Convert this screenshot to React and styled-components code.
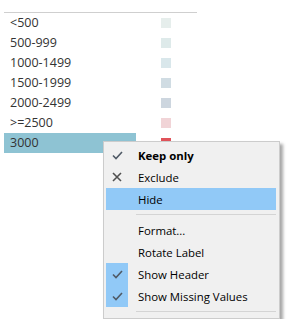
import React from 'react'
import styled, { createGlobalStyle } from 'styled-components'

const Global = createGlobalStyle`
  body {
    margin: 0;
    background: #fff;
    font-family: "Open Sans", "Noto Sans", sans-serif;
  }
`

const legend = [
  { label: '<500', color: '#e6eeec' },
  { label: '500-999', color: '#deeaea' },
  { label: '1000-1499', color: '#d9e7eb' },
  { label: '1500-1999', color: '#d0dce3' },
  { label: '2000-2499', color: '#cdd6df' },
  { label: '>=2500', color: '#f1d4d7' },
  { label: '3000', color: '#e0535a', selected: true },
]

const Check = () => (
  <svg width="11" height="9" viewBox="0 0 11 9">
    <polyline points="1,4.5 4,7.5 10,1" fill="none" stroke="#505a66" strokeWidth="1.6" />
  </svg>
)

const Cross = () => (
  <svg width="10" height="10" viewBox="0 0 10 10">
    <path d="M1 1 L9 9 M9 1 L1 9" stroke="#505050" strokeWidth="1.6" />
  </svg>
)

const App = () => {
  return (
    <>
      <Global />
      <Page>
        <Legend>
          {legend.map((l) => (
            <Row key={l.label}>
              <Label selected={l.selected}>{l.label}</Label>
              <Swatch style={{ background: l.color }} />
            </Row>
          ))}
        </Legend>
        <Menu>
          <Item bold>
            <Icon><Check /></Icon>
            Keep only
          </Item>
          <Item>
            <Icon><Cross /></Icon>
            Exclude
          </Item>
          <Item active>
            <Icon />
            Hide
          </Item>
          <Separator />
          <Item>
            <Icon />
            Format...
          </Item>
          <Item>
            <Icon />
            Rotate Label
          </Item>
          <Item>
            <Icon checked><Check /></Icon>
            Show Header
          </Item>
          <Item>
            <Icon checked><Check /></Icon>
            Show Missing Values
          </Item>
          <Separator />
        </Menu>
      </Page>
    </>
  )
}

const Page = styled.div`
  position: relative;
  width: 299px;
  height: 319px;
  overflow: hidden;
`
const Legend = styled.div`
  margin: 12px 0 0 4px;
  width: 193px;
  border-top: 1px solid #cfcfcf;
`
const Row = styled.div`
  display: flex;
  align-items: center;
  height: 20px;
`
const Label = styled.div`
  width: 132px;
  height: 20px;
  line-height: 20px;
  box-sizing: border-box;
  padding-left: 6px;
  font-size: 12.5px;
  color: #333;
  background: ${(p) => (p.selected ? '#8ec3d3' : 'transparent')};
`
const Swatch = styled.div`
  width: 10px;
  height: 10px;
  margin-left: 25px;
`
const Menu = styled.div`
  position: absolute;
  left: 103px;
  top: 141px;
  width: 177px;
  box-sizing: border-box;
  padding: 2px 3px 2px 2px;
  background: #f0f0f0;
  border: 1px solid #cccccc;
  box-shadow: 3px 3px 3px rgba(0, 0, 0, 0.35);
  font-size: 11.4px;
  color: #000;
`
const Item = styled.div`
  display: flex;
  align-items: center;
  height: 22px;
  font-weight: ${(p) => (p.bold ? 700 : 400)};
  background: ${(p) => (p.active ? '#91c9f7' : 'transparent')};
`
const Icon = styled.span`
  display: flex;
  align-items: center;
  justify-content: center;
  width: 22px;
  height: 22px;
  margin-right: 10px;
  background: ${(p) => (p.checked ? '#91c9f7' : 'transparent')};
`
const Separator = styled.div`
  height: 1px;
  margin: 4px 0 4px 30px;
  background: #d4d4d4;
`

export default App
